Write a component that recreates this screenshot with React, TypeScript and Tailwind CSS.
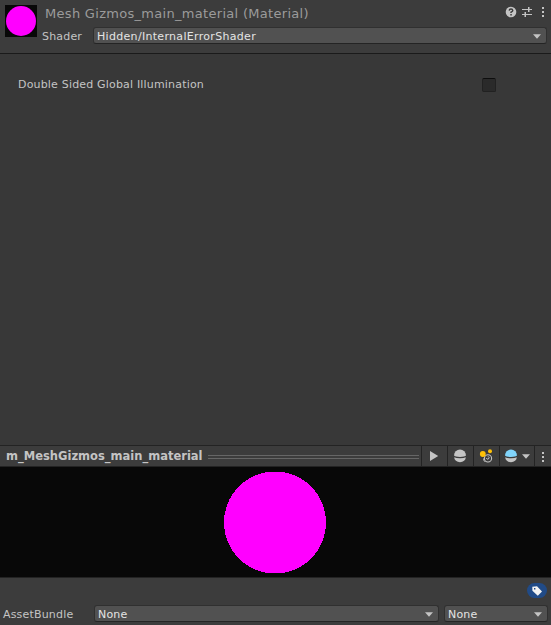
import React from "react";

function Dots({ className = "" }: { className?: string }) {
  return (
    <svg className={className} width="4" height="12" viewBox="0 0 4 12" fill="#c4c4c4">
      <rect x="1" y="1" width="2" height="2" />
      <rect x="1" y="5" width="2" height="2" />
      <rect x="1" y="9" width="2" height="2" />
    </svg>
  );
}

function Arrow() {
  return (
    <svg width="8" height="5" viewBox="0 0 8 5" className="shrink-0">
      <path d="M0 0.3H8L4 4.7Z" fill="#c4c4c4" />
    </svg>
  );
}

function Ball({ top }: { top: string }) {
  return (
    <svg width="14" height="14" viewBox="0 0 14 14" className="shrink-0">
      <path d="M1 6.6A6 6 0 0 1 13 6.6Q12 8 7 8T1 6.6Z" fill={top} />
      <path d="M1.2 8.2Q3 9.2 7 9.2T12.8 8.2A5.8 5 0 0 1 1.2 8.2Z" fill="#c4c4c4" />
    </svg>
  );
}

function Dropdown({ label, className }: { label: string; className: string }) {
  return (
    <div
      className={`flex h-[17px] items-center justify-between rounded-[3px] border border-[#303030] border-b-[#242424] bg-[#515151] pr-[5px] pl-[3px] text-[#e4e4e4] ${className}`}
    >
      <span className="pt-[2px]">{label}</span>
      <span className="flex pt-[2px]">
        <Arrow />
      </span>
    </div>
  );
}

export default function App() {
  return (
    <div className="flex h-[625px] w-[551px] flex-col overflow-hidden bg-[#383838] font-['DejaVu_Sans',sans-serif] text-[11px] leading-[14px] tracking-[0.18px] whitespace-nowrap text-[#c4c4c4]">
      <header className="flex h-[54px] shrink-0 border-b border-[#1a1a1a] bg-[#3c3c3c] pt-[5px] pl-[5px]">
        <div className="flex size-8 items-center justify-center bg-[#080808]">
          <div className="size-[30px] rounded-full bg-[#ff00ff]" />
        </div>
        <div className="flex flex-1 flex-col">
          <div className="flex h-[22px] justify-between pl-2">
            <span className="text-[13px] leading-[18px] tracking-[0.3px] text-[#9b9b9b]">
              Mesh Gizmos_main_material (Material)
            </span>
            <div className="flex items-start pt-px pr-[6px]">
              <svg className="mr-1" width="12" height="12" viewBox="0 0 12 12">
                <circle cx="6" cy="6" r="5.3" fill="#c4c4c4" />
                <path d="M4.2 4.6Q4.3 3 6 3T7.8 4.5Q7.8 5.4 6 6.2V7" fill="none" stroke="#3c3c3c" strokeWidth="1.4" />
                <rect x="5.3" y="8" width="1.5" height="1.5" fill="#3c3c3c" />
              </svg>
              <svg className="mr-2" width="12" height="12" viewBox="0 0 12 12" fill="#c4c4c4">
                <rect x="1" y="3" width="6" height="1" />
                <rect x="7" y="1" width="1.5" height="5" />
                <rect x="8" y="3" width="3" height="1" />
                <rect x="1" y="8" width="3" height="1" />
                <rect x="3.5" y="6" width="1.5" height="5" />
                <rect x="5" y="8" width="6" height="1" />
              </svg>
              <Dots />
            </div>
          </div>
          <div className="flex items-center pl-[5px]">
            <span className="w-[51px] pt-[2px]">Shader</span>
            <Dropdown label="Hidden/InternalErrorShader" className="w-[454px] tracking-[0.31px]" />
          </div>
        </div>
      </header>

      <main className="flex-1 pt-[23px] pl-[18px]">
        <div className="flex h-4 items-center">
          <span className="w-[464px]">Double Sided Global Illumination</span>
          <div className="size-[14px] rounded-[2px] border border-[#212121] border-t-[#0d0d0d] bg-[#2a2a2a]" />
        </div>
      </main>

      <div className="flex h-[22px] shrink-0 items-stretch border-y border-[#232323] bg-[#3c3c3c]">
        <span className="w-[208px] pl-[6px] text-[11.5px] leading-5 font-bold tracking-normal">
          m_MeshGizmos_main_material
        </span>
        <div className="mt-[9px] mr-[2px] h-1 flex-1 border-y border-[#666666]" />
        <div className="flex w-[26px] items-center justify-center border-l border-[#232323] pr-[2px]">
          <svg width="10" height="12" viewBox="0 0 10 12">
            <path d="M1 1L9.2 6L1 11Z" fill="#c4c4c4" />
          </svg>
        </div>
        <div className="flex w-[26px] items-center justify-center border-l border-[#232323] pr-[2px]">
          <Ball top="#c4c4c4" />
        </div>
        <div className="flex w-[26px] items-center justify-center border-l border-[#232323] pr-[2px]">
          <svg width="14" height="14" viewBox="0 0 14 14">
            <circle cx="9" cy="9.4" r="3.6" fill="none" stroke="#c4c4c4" strokeWidth="1.1" />
            <path d="M9 7.3Q11 8.6 9.4 10Q7.8 10.6 7.2 9.2M4.6 9.5Q4.4 11.7 6.4 13" fill="none" stroke="#c4c4c4" />
            <circle cx="3.8" cy="5" r="2.9" fill="#ffc107" />
            <circle cx="11" cy="2.2" r="2" fill="#ffc107" />
          </svg>
        </div>
        <div className="flex w-[35px] items-center gap-1 border-l border-[#232323] pl-1">
          <Ball top="#81d4fa" />
          <Arrow />
        </div>
        <div className="flex w-[17px] items-center border-l border-[#232323] pt-px pl-[6px]">
          <Dots />
        </div>
      </div>

      <div className="flex h-[110px] shrink-0 justify-center bg-[#080808] pt-1">
        <svg width="105" height="104" viewBox="0 0 105 104" shapeRendering="crispEdges">
          <circle cx="52" cy="51.5" r="51" fill="#ff00ff" />
        </svg>
      </div>

      <footer className="flex h-12 shrink-0 flex-col border-t border-[#232323] bg-[#3c3c3c]">
        <div className="flex h-[27px] items-start justify-end pt-[5px] pr-1">
          <div className="flex h-[15px] w-5 items-center justify-center rounded-full bg-[#214b87]">
            <svg width="10" height="10" viewBox="0 0 10 10">
              <path fillRule="evenodd" d="M0.3 0.8L5 0.3L10 5.6L5.8 9.8L0.4 4.8ZM2 2V3.4H3.4V2Z" fill="#f2f2f2" />
            </svg>
          </div>
        </div>
        <div className="flex items-center pl-[3px]">
          <span className="w-[91px] pt-[2px]">AssetBundle</span>
          <Dropdown label="None" className="mr-[5px] w-[345px]" />
          <Dropdown label="None" className="w-[104px]" />
        </div>
      </footer>
    </div>
  );
}
